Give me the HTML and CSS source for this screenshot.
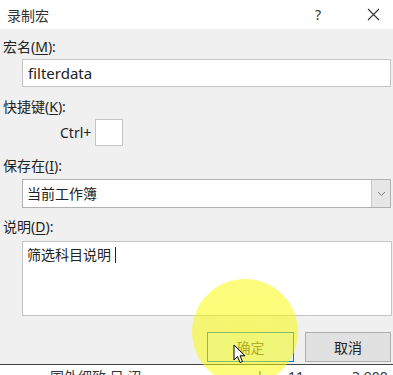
FILE: index.html
```html
<!DOCTYPE html>
<html lang="zh-CN">
<head>
    <meta charset="UTF-8">
    <meta name="viewport" content="width=device-width, initial-scale=1.0">
    <title>录制宏</title>
    <link rel="stylesheet" href="styles.css">
</head>
<body>
    <div class="dialog">
        <div class="titlebar">
            <span class="title">录制宏</span>
            <span class="help">?</span>
            <span class="close">
                <svg width="13" height="13" viewBox="0 0 13 13">
                    <path d="M1 1 L12 12 M12 1 L1 12" stroke="#333" stroke-width="1.1" fill="none"/>
                </svg>
            </span>
        </div>
        <div class="content">
            <div class="field-label label-name">宏名(<u>M</u>):</div>
            <div class="textbox name-box">filterdata</div>

            <div class="field-label label-key">快捷键(<u>K</u>):</div>
            <div class="shortcut-row">
                <span class="ctrl">Ctrl+</span>
                <div class="key-box"></div>
            </div>

            <div class="field-label label-store">保存在(<u>I</u>):</div>
            <div class="select-box">
                <span class="select-text">当前工作簿</span>
                <span class="select-arrow">
                    <svg width="9" height="6" viewBox="0 0 9 6">
                        <path d="M1 1 L4.5 4.5 L8 1" stroke="#777" stroke-width="1" fill="none"/>
                    </svg>
                </span>
            </div>

            <div class="field-label label-desc">说明(<u>D</u>):</div>
            <div class="textbox desc-box">筛选科目说明 <span class="caret"></span></div>

            <div class="button-row">
                <button class="btn btn-ok">确定</button>
                <button class="btn btn-cancel">取消</button>
            </div>
        </div>
        <div class="sheet-strip">
            <span class="cell c1">国外细致 目 沼</span>
            <span class="cell c2">|</span>
            <span class="cell c3">11</span>
            <span class="cell c4">3 900</span>
        </div>

        <div class="highlight"></div>
        <svg class="pointer" width="14" height="21" viewBox="0 0 14 21">
            <path d="M1 1 L1 16 L4.5 12.5 L7 18.5 L9.5 17.5 L7 11.8 L12 11.8 Z" fill="#fff" stroke="#000" stroke-width="1"/>
        </svg>
    </div>
</body>
</html>
```

FILE: styles.css
```css
body {
    margin: 0;
    padding: 0;
    font-family: "Noto Sans", "Noto Sans CJK SC", sans-serif;
    color: #222;
    background: #f0f0f0;
}
.dialog {
    position: relative;
    width: 393px;
    height: 375px;
    overflow: hidden;
    background: #f0f0f0;
}
.titlebar {
    height: 29px;
    background: #fff;
    display: flex;
    align-items: center;
    padding-left: 7px;
    font-size: 14px;
}
.title {
    flex: 1;
    color: #333;
}
.help {
    width: 14px;
    margin-right: 38px;
    font-size: 14px;
    color: #333;
}
.close {
    display: flex;
    width: 13px;
    margin-right: 13px;
}
.content {
    display: flex;
    flex-direction: column;
    padding: 0 2px 0 3px;
    font-size: 14px;
}
.field-label {
    height: 20px;
    line-height: 20px;
}
.field-label u {
    text-underline-offset: 2px;
}
.label-name {
    margin-top: 8px;
}
.label-key {
    margin-top: 10px;
}
.label-store {
    margin-top: 10px;
}
.label-desc {
    margin-top: 9px;
}
.textbox {
    background: #fff;
    border: 1px solid #c4c4c4;
    box-sizing: border-box;
    margin-left: 19px;
    padding-left: 5px;
}
.name-box {
    margin-top: 2px;
    height: 28px;
    line-height: 26px;
    font-size: 15px;
}
.shortcut-row {
    display: flex;
    align-items: center;
    margin-top: 2px;
    padding-left: 57px;
}
.ctrl {
    font-size: 14px;
    margin-right: 4px;
}
.key-box {
    width: 28px;
    height: 27px;
    box-sizing: border-box;
    background: #fff;
    border: 1px solid #c4c4c4;
}
.select-box {
    display: flex;
    margin-top: 3px;
    margin-left: 19px;
    height: 29px;
    box-sizing: border-box;
    border: 1px solid #b0b0b0;
    background: #fff;
}
.select-text {
    flex: 1;
    line-height: 27px;
    padding-left: 4px;
}
.select-arrow {
    width: 18px;
    display: flex;
    align-items: center;
    justify-content: center;
    background: #e6e6e6;
    border-left: 1px solid #c8c8c8;
}
.desc-box {
    margin-top: 4px;
    margin-right: -1px;
    height: 75px;
    padding-top: 3px;
    padding-left: 4px;
    line-height: 20px;
    font-size: 14px;
}
.caret {
    display: inline-block;
    width: 1px;
    height: 16px;
    background: #222;
    vertical-align: -3px;
}
.button-row {
    display: flex;
    justify-content: flex-end;
    gap: 11px;
    margin-top: 16px;
}
.btn {
    height: 30px;
    font-family: "Noto Sans CJK SC", sans-serif;
    font-size: 14px;
    color: #222;
    padding: 0;
    border-radius: 0;
}
.btn-ok {
    width: 87px;
    background: #e5f1fb;
    border: 1px solid #0078d7;
    color: #555;
}
.btn-cancel {
    width: 86px;
    background: #e1e1e1;
    border: 1px solid #adadad;
}
.sheet-strip {
    position: relative;
    margin-top: 2px;
    height: 11px;
    background: #fff;
    border-top: 1px solid #444;
    overflow: hidden;
    font-size: 14px;
    line-height: 20px;
}
.cell {
    position: absolute;
    top: 2px;
    color: #333;
}
.c1 { left: 50px; }
.c2 { left: 256px; }
.c3 { left: 288px; }
.c4 { left: 352px; }
.highlight {
    position: absolute;
    left: 192px;
    top: 279px;
    width: 106px;
    height: 106px;
    border-radius: 50%;
    background: radial-gradient(circle, rgba(250, 250, 0, 0.55) 0%, rgba(250, 250, 0, 0.5) 85%, rgba(250, 250, 0, 0) 100%);
}
.pointer {
    position: absolute;
    left: 233px;
    top: 344px;
}
```
